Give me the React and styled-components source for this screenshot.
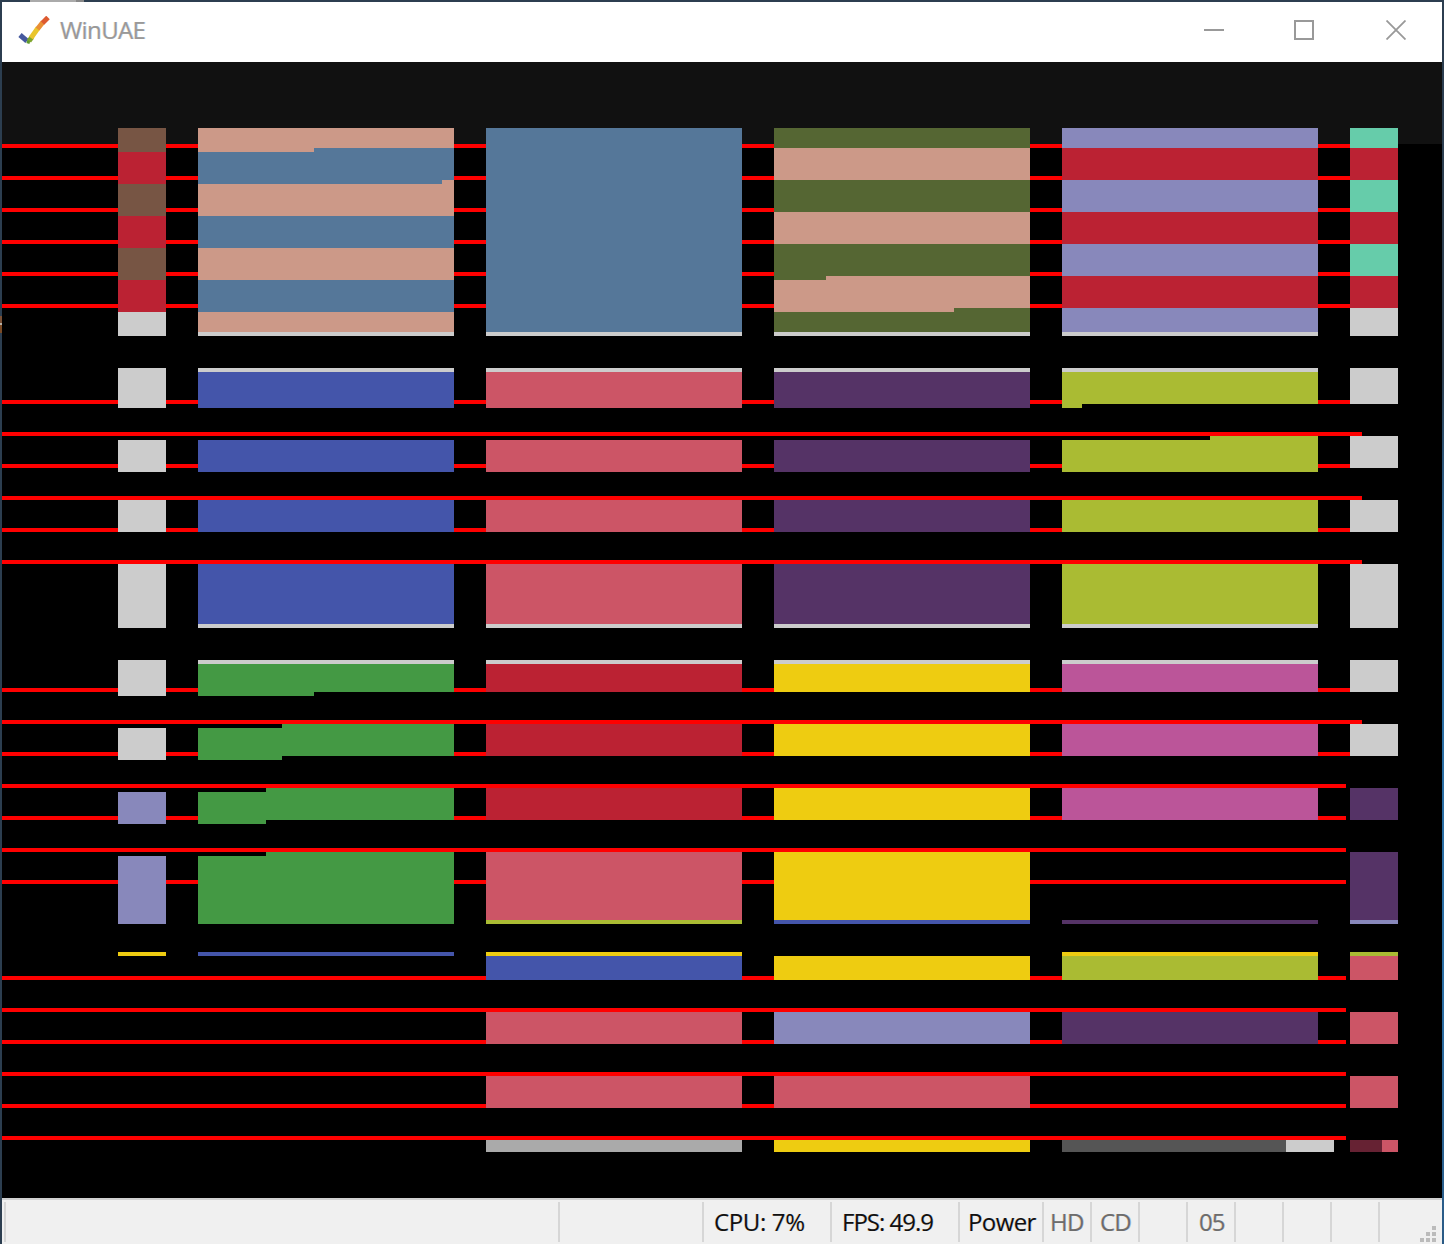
import React from 'react';
import styled, { createGlobalStyle } from 'styled-components';

const Global = createGlobalStyle`
  html, body { margin: 0; padding: 0; background: #2c3e50; }
  #root { width: 1444px; height: 1244px; }
`;

const Frame = styled.div`
  position: relative;
  box-sizing: border-box;
  width: 1444px;
  height: 1244px;
  padding: 2px 2px 0 2px;
  display: flex;
  flex-direction: column;
  background:
    linear-gradient(#2c3e50, #2c3e50) left top / 50% 100% no-repeat,
    linear-gradient(to bottom, #2c3e50 0%, #2c3e50 30%, #2a6ea5 45%, #2a6ea5 80%, #2a5a85 100%);
`;

const TopGlimpse = styled.span`
  position: absolute;
  top: 0;
  left: 30px;
  width: 54px;
  height: 2px;
  background: linear-gradient(to right, #aaa 0, #aaa 85%, #888 85%, #888 100%);
`;

const LeftGlimpse = styled.span`
  position: absolute;
  top: 316px;
  left: 0;
  width: 2px;
  height: 17px;
  background: linear-gradient(to bottom, #7a5035 0, #7a5035 40%, #b9b1a8 40%, #b9b1a8 55%, #7a4a25 55%);
`;

const TitleBar = styled.header`
  flex: none;
  box-sizing: border-box;
  height: 60px;
  padding: 0 0 4px 16px;
  background: #fff;
  display: flex;
  align-items: center;
`;

const AppIcon = styled.svg`
  flex: none;
  width: 32px;
  height: 28px;
  margin-right: 10px;
`;

const Title = styled.h1`
  flex: 1;
  margin: 0;
  font: 400 24px/56px "Open Sans", "Noto Sans", sans-serif;
  letter-spacing: -0.6px;
  color: #999;
  text-shadow: -0.6px 0 rgba(230, 170, 90, 0.35), 0.6px 0 rgba(80, 150, 230, 0.35);
`;

const Controls = styled.div`
  flex: none;
  display: flex;
  align-items: center;
`;

const ControlBtn = styled.button`
  box-sizing: border-box;
  width: 92px;
  height: 56px;
  margin: 0;
  padding: 0 0 0 ${(p) => p.$shift || 0}px;
  border: 0;
  background: none;
  display: flex;
  align-items: center;
  justify-content: center;
  svg { display: block; width: 20px; height: 20px; }
`;

const Screen = styled.main`
  flex: 1;
  min-height: 0;
  background: #000;
  svg { display: block; }
`;

const StatusBar = styled.footer`
  position: relative;
  flex: none;
  box-sizing: border-box;
  height: 46px;
  padding: 2px 0 2px 2px;
  background: #f0f0f0;
  border-top: 2px solid #d0d0d0;
  display: flex;
`;

const Cell = styled.div`
  flex: none;
  box-sizing: border-box;
  width: ${(p) => p.$w}px;
  border-left: 2px solid #d6d6d6;
  padding-left: ${(p) => p.$pad || 0}px;
  font: 400 24px/40px "Open Sans", "Noto Sans", sans-serif;
  letter-spacing: ${(p) => p.$track ?? -0.75}px;
  white-space: nowrap;
  color: ${(p) => (p.$dim ? '#6d6d6d' : '#111')};
  text-shadow: -0.6px 0 rgba(235, 160, 60, 0.4), 0.6px 0 rgba(60, 140, 235, 0.4);
`;

const Grip = styled.svg`
  position: absolute;
  right: 6px;
  bottom: 2px;
  width: 16px;
  height: 16px;
`;

const GREY = '#ccc', BROWN = '#754', RED = '#b23', PEACH = '#c98', BLUE = '#579', OLIVE = '#563',
  PERI = '#88b', TEAL = '#6ca', INDIGO = '#45a', ROSE = '#c56', PURPLE = '#536', LIME = '#ab3',
  GREEN = '#494', YELLOW = '#ec1', MAGENTA = '#b59';

const C0 = 118, C1 = 198, C2 = 486, C3 = 774, C4 = 1062, C5 = 1350;

// Copper bars of the emulated screen: each line is 4px tall, from x=2 to its end.
const copper = [
  [144, 1362], [176, 1362], [208, 1362], [240, 1362], [272, 1362], [304, 1362],
  [400, 1362], [432, 1362], [464, 1362], [496, 1362], [528, 1362], [560, 1362],
  [688, 1362], [720, 1362], [752, 1362],
  [784, 1346], [816, 1346], [848, 1346], [880, 1346], [976, 1346],
  [1008, 1346], [1040, 1346], [1072, 1346], [1104, 1346], [1136, 1346],
];

// Stack of colour bands in one brick column: [y0, colour, y1, colour, y2 ...]
const stack = (x, w, ...s) => {
  const out = [];
  for (let i = 0; i + 2 < s.length; i += 2) out.push([x, s[i], w, s[i + 2] - s[i], s[i + 1]]);
  return out;
};

const bricks = [
  // top wall
  ...stack(C0, 48, 128, BROWN, 152, RED, 184, BROWN, 216, RED, 248, BROWN, 280, RED, 312, GREY, 336),
  ...stack(C1, 116, 128, PEACH, 152, BLUE, 184),
  ...stack(C1 + 116, 128, 128, PEACH, 148, BLUE, 184),
  ...stack(C1 + 244, 12, 128, PEACH, 148, BLUE, 180, PEACH, 184),
  ...stack(C1, 256, 184, PEACH, 216, BLUE, 248, PEACH, 280, BLUE, 312, PEACH, 332, GREY, 336),
  ...stack(C2, 256, 128, BLUE, 332, GREY, 336),
  ...stack(C3, 256, 128, OLIVE, 148, PEACH, 180, OLIVE, 212, PEACH, 244, OLIVE, 276),
  ...stack(C3, 52, 276, OLIVE, 280, PEACH, 312, OLIVE, 332),
  ...stack(C3 + 52, 128, 276, PEACH, 312, OLIVE, 332),
  ...stack(C3 + 180, 76, 276, PEACH, 308, OLIVE, 332),
  ...stack(C3, 256, 332, GREY, 336),
  ...stack(C4, 256, 128, PERI, 148, RED, 180, PERI, 212, RED, 244, PERI, 276, RED, 308, PERI, 332, GREY, 336),
  ...stack(C5, 48, 128, TEAL, 148, RED, 180, TEAL, 212, RED, 244, TEAL, 276, RED, 308, GREY, 336),
  // row 2
  ...stack(C0, 48, 368, GREY, 408),
  ...stack(C1, 256, 368, GREY, 372, INDIGO, 408),
  ...stack(C2, 256, 368, GREY, 372, ROSE, 408),
  ...stack(C3, 256, 368, GREY, 372, PURPLE, 408),
  ...stack(C4, 256, 368, GREY, 372, LIME, 404),
  ...stack(C4, 20, 404, LIME, 408),
  ...stack(C5, 48, 368, GREY, 404),
  // row 3
  ...stack(C0, 48, 440, GREY, 472),
  ...stack(C1, 256, 440, INDIGO, 472),
  ...stack(C2, 256, 440, ROSE, 472),
  ...stack(C3, 256, 440, PURPLE, 472),
  ...stack(C4, 148, 440, LIME, 472),
  ...stack(C4 + 148, 108, 436, LIME, 472),
  ...stack(C5, 48, 436, GREY, 468),
  // row 4
  ...stack(C0, 48, 500, GREY, 532),
  ...stack(C1, 256, 500, INDIGO, 532),
  ...stack(C2, 256, 500, ROSE, 532),
  ...stack(C3, 256, 500, PURPLE, 532),
  ...stack(C4, 256, 500, LIME, 532),
  ...stack(C5, 48, 500, GREY, 532),
  // row 5
  ...stack(C0, 48, 564, GREY, 628),
  ...stack(C1, 256, 564, INDIGO, 624, GREY, 628),
  ...stack(C2, 256, 564, ROSE, 624, GREY, 628),
  ...stack(C3, 256, 564, PURPLE, 624, GREY, 628),
  ...stack(C4, 256, 564, LIME, 624, GREY, 628),
  ...stack(C5, 48, 564, GREY, 628),
  // row 6
  ...stack(C0, 48, 660, GREY, 696),
  ...stack(C1, 256, 660, GREY, 664, GREEN, 692),
  ...stack(C1, 116, 692, GREEN, 696),
  ...stack(C2, 256, 660, GREY, 664, RED, 692),
  ...stack(C3, 256, 660, GREY, 664, YELLOW, 692),
  ...stack(C4, 256, 660, GREY, 664, MAGENTA, 692),
  ...stack(C5, 48, 660, GREY, 692),
  // row 7
  ...stack(C0, 48, 728, GREY, 760),
  ...stack(C1, 84, 728, GREEN, 760),
  ...stack(C1 + 84, 172, 724, GREEN, 756),
  ...stack(C2, 256, 724, RED, 756),
  ...stack(C3, 256, 724, YELLOW, 756),
  ...stack(C4, 256, 724, MAGENTA, 756),
  ...stack(C5, 48, 724, GREY, 756),
  // row 8
  ...stack(C0, 48, 792, PERI, 824),
  ...stack(C1, 68, 792, GREEN, 824),
  ...stack(C1 + 68, 188, 788, GREEN, 820),
  ...stack(C2, 256, 788, RED, 820),
  ...stack(C3, 256, 788, YELLOW, 820),
  ...stack(C4, 256, 788, MAGENTA, 820),
  ...stack(C5, 48, 788, PURPLE, 820),
  // row 9
  ...stack(C0, 48, 856, PERI, 924),
  ...stack(C1, 68, 856, GREEN, 924),
  ...stack(C1 + 68, 188, 852, GREEN, 924),
  ...stack(C2, 256, 852, ROSE, 920, LIME, 924),
  ...stack(C3, 256, 852, YELLOW, 920, INDIGO, 924),
  ...stack(C4, 256, 920, PURPLE, 924),
  ...stack(C5, 48, 852, PURPLE, 920, PERI, 924),
  // row 10
  ...stack(C0, 48, 952, YELLOW, 956),
  ...stack(C1, 256, 952, INDIGO, 956),
  ...stack(C2, 256, 952, YELLOW, 956, INDIGO, 980),
  ...stack(C3, 256, 956, YELLOW, 980),
  ...stack(C4, 256, 952, YELLOW, 956, LIME, 980),
  ...stack(C5, 48, 952, LIME, 956, ROSE, 980),
  // row 11
  ...stack(C2, 256, 1012, ROSE, 1044),
  ...stack(C3, 256, 1012, PERI, 1044),
  ...stack(C4, 256, 1012, PURPLE, 1044),
  ...stack(C5, 48, 1012, ROSE, 1044),
  // row 12
  ...stack(C2, 256, 1076, ROSE, 1108),
  ...stack(C3, 256, 1076, ROSE, 1108),
  ...stack(C5, 48, 1076, ROSE, 1108),
  // bottom row
  ...stack(C2, 256, 1140, '#aaa', 1152),
  ...stack(C3, 256, 1140, YELLOW, 1152),
  ...stack(C4, 224, 1140, '#555', 1152),
  ...stack(C4 + 224, 48, 1140, GREY, 1152),
  ...stack(C5, 32, 1140, '#623', 1152),
  ...stack(C5 + 32, 16, 1140, ROSE, 1152),
];

const cells = [
  { w: 554 },
  { w: 144 },
  { w: 128, pad: 10, text: 'CPU: 7%', track: -0.35 },
  { w: 128, pad: 10, text: 'FPS: 49.9', track: -1 },
  { w: 84, pad: 8, text: 'Power', track: -0.6 },
  { w: 48, pad: 6, text: 'HD', dim: true },
  { w: 48, pad: 8, text: 'CD', dim: true },
  { w: 48 },
  { w: 48, pad: 11, text: '05', dim: true, track: -1 },
  { w: 48 },
  { w: 48 },
  { w: 48 },
  { w: 64 },
];

const gripDots = [[0, 12], [6, 12], [12, 12], [6, 6], [12, 6], [12, 0]];

export default function App() {
  return (
    <Frame>
      <Global />
      <TopGlimpse />
      <LeftGlimpse />
      <TitleBar>
        <AppIcon viewBox="0 0 32 28" aria-hidden="true">
          <g fill="none" strokeWidth="5">
            <path d="M2 19 L9 25" stroke="#46599e" />
            <path d="M9 25 L12 26" stroke="#5e9a2e" strokeWidth="4" />
            <path d="M11 25 L14 21" stroke="#7fa52c" />
            <path d="M13 22 L20 12" stroke="#e9c52c" />
            <path d="M19.5 13 L25 6" stroke="#e98f35" />
            <path d="M24.5 7 L30 1.5" stroke="#dd5a30" />
          </g>
        </AppIcon>
        <Title>WinUAE</Title>
        <Controls>
          <ControlBtn aria-label="Minimize" $shift={4}>
            <svg viewBox="0 0 20 20"><rect x="0" y="9" width="20" height="2" fill="#999" /></svg>
          </ControlBtn>
          <ControlBtn aria-label="Maximize">
            <svg viewBox="0 0 20 20"><rect x="1" y="1" width="18" height="18" fill="none" stroke="#999" strokeWidth="2" /></svg>
          </ControlBtn>
          <ControlBtn aria-label="Close">
            <svg viewBox="0 0 20 20"><path d="M0.5 0.5 L19.5 19.5 M19.5 0.5 L0.5 19.5" fill="none" stroke="#999" strokeWidth="1.8" /></svg>
          </ControlBtn>
        </Controls>
      </TitleBar>
      <Screen>
        <svg width="1440" height="1136" viewBox="2 62 1440 1136" shapeRendering="crispEdges">
          <rect x="2" y="62" width="1440" height="82" fill="#111" />
          {copper.map(([y, end]) => (
            <rect key={y} x="2" y={y} width={end - 2} height="4" fill="#f00" />
          ))}
          {bricks.map(([x, y, w, h, c], i) => (
            <rect key={i} x={x} y={y} width={w} height={h} fill={c} />
          ))}
        </svg>
      </Screen>
      <StatusBar>
        {cells.map((c, i) => (
          <Cell key={i} $w={c.w} $pad={c.pad} $dim={c.dim} $track={c.track}>{c.text}</Cell>
        ))}
        <Grip viewBox="0 0 16 16" aria-hidden="true">
          {gripDots.map(([x, y]) => (
            <rect key={`${x}-${y}`} x={x} y={y} width="4" height="4" fill="#bbb" />
          ))}
        </Grip>
      </StatusBar>
    </Frame>
  );
}
